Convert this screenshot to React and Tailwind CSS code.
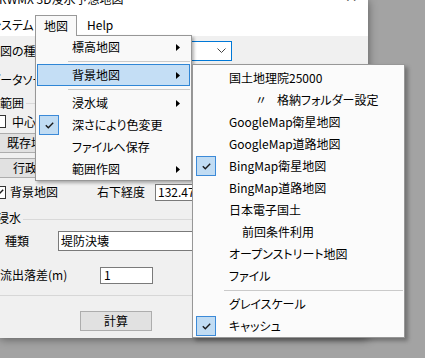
import React from 'react';

const font = "font-['Noto_Sans_CJK_JP','Noto_Sans',sans-serif] [font-feature-settings:'palt']";

function Check() {
    return (
        <svg width="9" height="7" viewBox="0 0 9 7" className="block">
            <path d="M0.8 3.2 L3.3 5.8 L8.2 0.8" fill="none" stroke="#1a1a1a" strokeWidth="1.4" />
        </svg>
    );
}

function Arrow() {
    return (
        <svg width="4" height="7" viewBox="0 0 4 7" className="block">
            <polygon points="0,0 4,3.5 0,7" fill="#000" />
        </svg>
    );
}

function CheckBox({ checked }) {
    return (
        <span className="flex items-center justify-center w-[13px] h-[13px] border border-[#333] bg-white shrink-0">
            {checked && <Check />}
        </span>
    );
}

function MenuRow({ label, arrow, checked, active, gutter = 34 }) {
    return (
        <div
            className={
                active
                    ? 'mx-[1px] h-[22px] flex items-center border border-[#2f86d6] bg-[#c4def5]'
                    : 'mx-[1px] h-[22px] flex items-center border border-transparent'
            }
        >
            <div className="h-full flex items-center shrink-0" style={{ width: gutter }}>
                {checked && (
                    <span className="ml-[1px] w-[20px] h-[20px] flex items-center justify-center bg-[#c1dcf3] border border-[#3c8ad8]">
                        <Check />
                    </span>
                )}
            </div>
            <span className="whitespace-nowrap">{label}</span>
            {arrow && (
                <span className="ml-auto mr-[9px]">
                    <Arrow />
                </span>
            )}
        </div>
    );
}

function Sep({ left }) {
    return (
        <div className="h-[6px] pt-[3px]">
            <div className="h-px bg-[#cacaca] mr-[1px]" style={{ marginLeft: left }} />
        </div>
    );
}

export default function App() {
    return (
        <div className={`relative w-[425px] h-[358px] overflow-hidden bg-[#a3a3a3] text-[12px] text-black ${font}`}>
            {/* Window */}
            <div className="relative w-[368px] h-[338px] bg-[#f0f0f0] flex flex-col shadow-[0_1px_9px_rgba(0,0,0,0.45)]">
                {/* Title bar */}
                <div className="h-[14px] bg-white overflow-hidden flex justify-between">
                    <span className="-mt-[9px] -ml-[1px] leading-[16px] whitespace-nowrap">RWMX 3D浸水予想地図</span>
                    <span className="-mt-[12px] mr-[10px] text-[15px] leading-[16px] text-[#333]">✕</span>
                </div>

                {/* Menu bar */}
                <div className="h-[22px] bg-white flex">
                    <span className="w-[45px] -ml-[10px] flex items-center whitespace-nowrap">システム</span>
                    <span className="relative z-20 mt-[1px] w-[42px] h-[21px] flex items-center justify-center border-t border-l border-r border-[#999] bg-[#f9f9f9]">
                        地図
                    </span>
                    <span className="ml-[10px] flex items-center">Help</span>
                </div>

                {/* Body */}
                <div className="flex flex-col pt-[1px] leading-none">
                    <div className="h-[27px] flex items-center">
                        <span className="w-[112px] -ml-[12px] whitespace-nowrap">地図の種類</span>
                        <span className="w-[132px] h-[20px] flex items-center justify-end pr-[5px] bg-white border border-[#0078d7]">
                            <svg width="9" height="5" viewBox="0 0 9 5">
                                <polyline points="0.5,0.5 4.5,4.5 8.5,0.5" fill="none" stroke="#444" strokeWidth="1" />
                            </svg>
                        </span>
                    </div>

                    <div className="h-[32px] flex items-center">
                        <span className="-ml-[11px] whitespace-nowrap">データソース</span>
                    </div>

                    <div className="h-[14px] flex items-center">
                        <span className="whitespace-nowrap">範囲</span>
                        <span className="flex-1 ml-[2px] mr-[8px] h-px bg-[#d9d9d9]" />
                    </div>

                    <div className="h-[23px] flex items-center">
                        <span className="-ml-[7px]">
                            <CheckBox />
                        </span>
                        <span className="ml-[6px]">中心</span>
                    </div>

                    <button className="h-[20px] w-[160px] -ml-[10px] pl-[16px] text-left border border-[#adadad] bg-[#e1e1e1]">
                        既存地図から作成
                    </button>
                    <button className="mt-[5px] h-[20px] w-[160px] -ml-[10px] pl-[22px] text-left border border-[#adadad] bg-[#e1e1e1]">
                        行政区域から作成
                    </button>

                    <div className="h-[28px] flex items-center">
                        <div className="w-[104px] -ml-[7px] flex items-center">
                            <CheckBox checked />
                            <span className="ml-[4px]">背景地図</span>
                        </div>
                        <span className="w-[58px]">右下経度</span>
                        <span className="w-[90px] h-[17px] flex items-center pl-[2px] bg-white border border-[#7a7a7a] overflow-hidden whitespace-nowrap">
                            132.4712
                        </span>
                    </div>

                    <div className="h-[24px] flex items-center">
                        <span className="-ml-[3px] whitespace-nowrap">浸水</span>
                        <span className="flex-1 mt-[3px] ml-[2px] mr-[8px] h-px bg-[#d9d9d9]" />
                    </div>

                    <div className="h-[22px] flex items-center">
                        <span className="w-[53px] ml-[5px]">種類</span>
                        <span className="w-[250px] h-[20px] flex items-center pl-[2px] bg-white border border-[#7a7a7a]">
                            堤防決壊
                        </span>
                    </div>

                    <div className="mt-[6px] h-[34px] flex items-center">
                        <span className="w-[100px] whitespace-nowrap">流出落差(m)</span>
                        <span className="w-[53px] h-[17px] flex items-center pl-[3px] bg-white border border-[#7a7a7a]">1</span>
                    </div>

                    <div className="mt-[3px] mr-[8px] h-px bg-[#d7d7d7]" />

                    <button className="mt-[15px] ml-[80px] w-[72px] h-[20px] border border-[#adadad] bg-[#e1e1e1]">
                        計算
                    </button>
                </div>
            </div>

            {/* 地図 dropdown */}
            <div className="absolute z-10 left-[35px] top-[35px] w-[157px] border border-[#979797] bg-[#f9f9f9] shadow-[2px_2px_3px_rgba(0,0,0,0.3)]">
                <MenuRow label="標高地図" arrow />
                <Sep left={32} />
                <MenuRow label="背景地図" arrow active />
                <Sep left={32} />
                <MenuRow label="浸水域" arrow />
                <MenuRow label="深さにより色変更" checked />
                <MenuRow label="ファイルへ保存" />
                <MenuRow label="範囲作図" arrow />
            </div>

            {/* 背景地図 submenu */}
            <div className="absolute z-30 left-[192px] top-[64px] w-[213px] h-[274px] pt-[2px] border border-[#979797] bg-[#fbfbfb] shadow-[3px_3px_4px_rgba(0,0,0,0.3)]">
                <MenuRow label="国土地理院25000" />
                <MenuRow
                    label={
                        <span className="flex">
                            <span className="ml-[26px] w-[12px]">〃</span>
                            <span className="ml-[10px]">格納フォルダー設定</span>
                        </span>
                    }
                />
                <MenuRow label="GoogleMap衛星地図" />
                <MenuRow label="GoogleMap道路地図" />
                <MenuRow label="BingMap衛星地図" checked />
                <MenuRow label="BingMap道路地図" />
                <MenuRow label="日本電子国土" />
                <MenuRow label={<span className="ml-[13px]">前回条件利用</span>} />
                <MenuRow label="オープンストリート地図" />
                <MenuRow label="ファイル" />
                <Sep left={31} />
                <MenuRow label="グレイスケール" />
                <MenuRow label="キャッシュ" checked />
            </div>
        </div>
    );
}
